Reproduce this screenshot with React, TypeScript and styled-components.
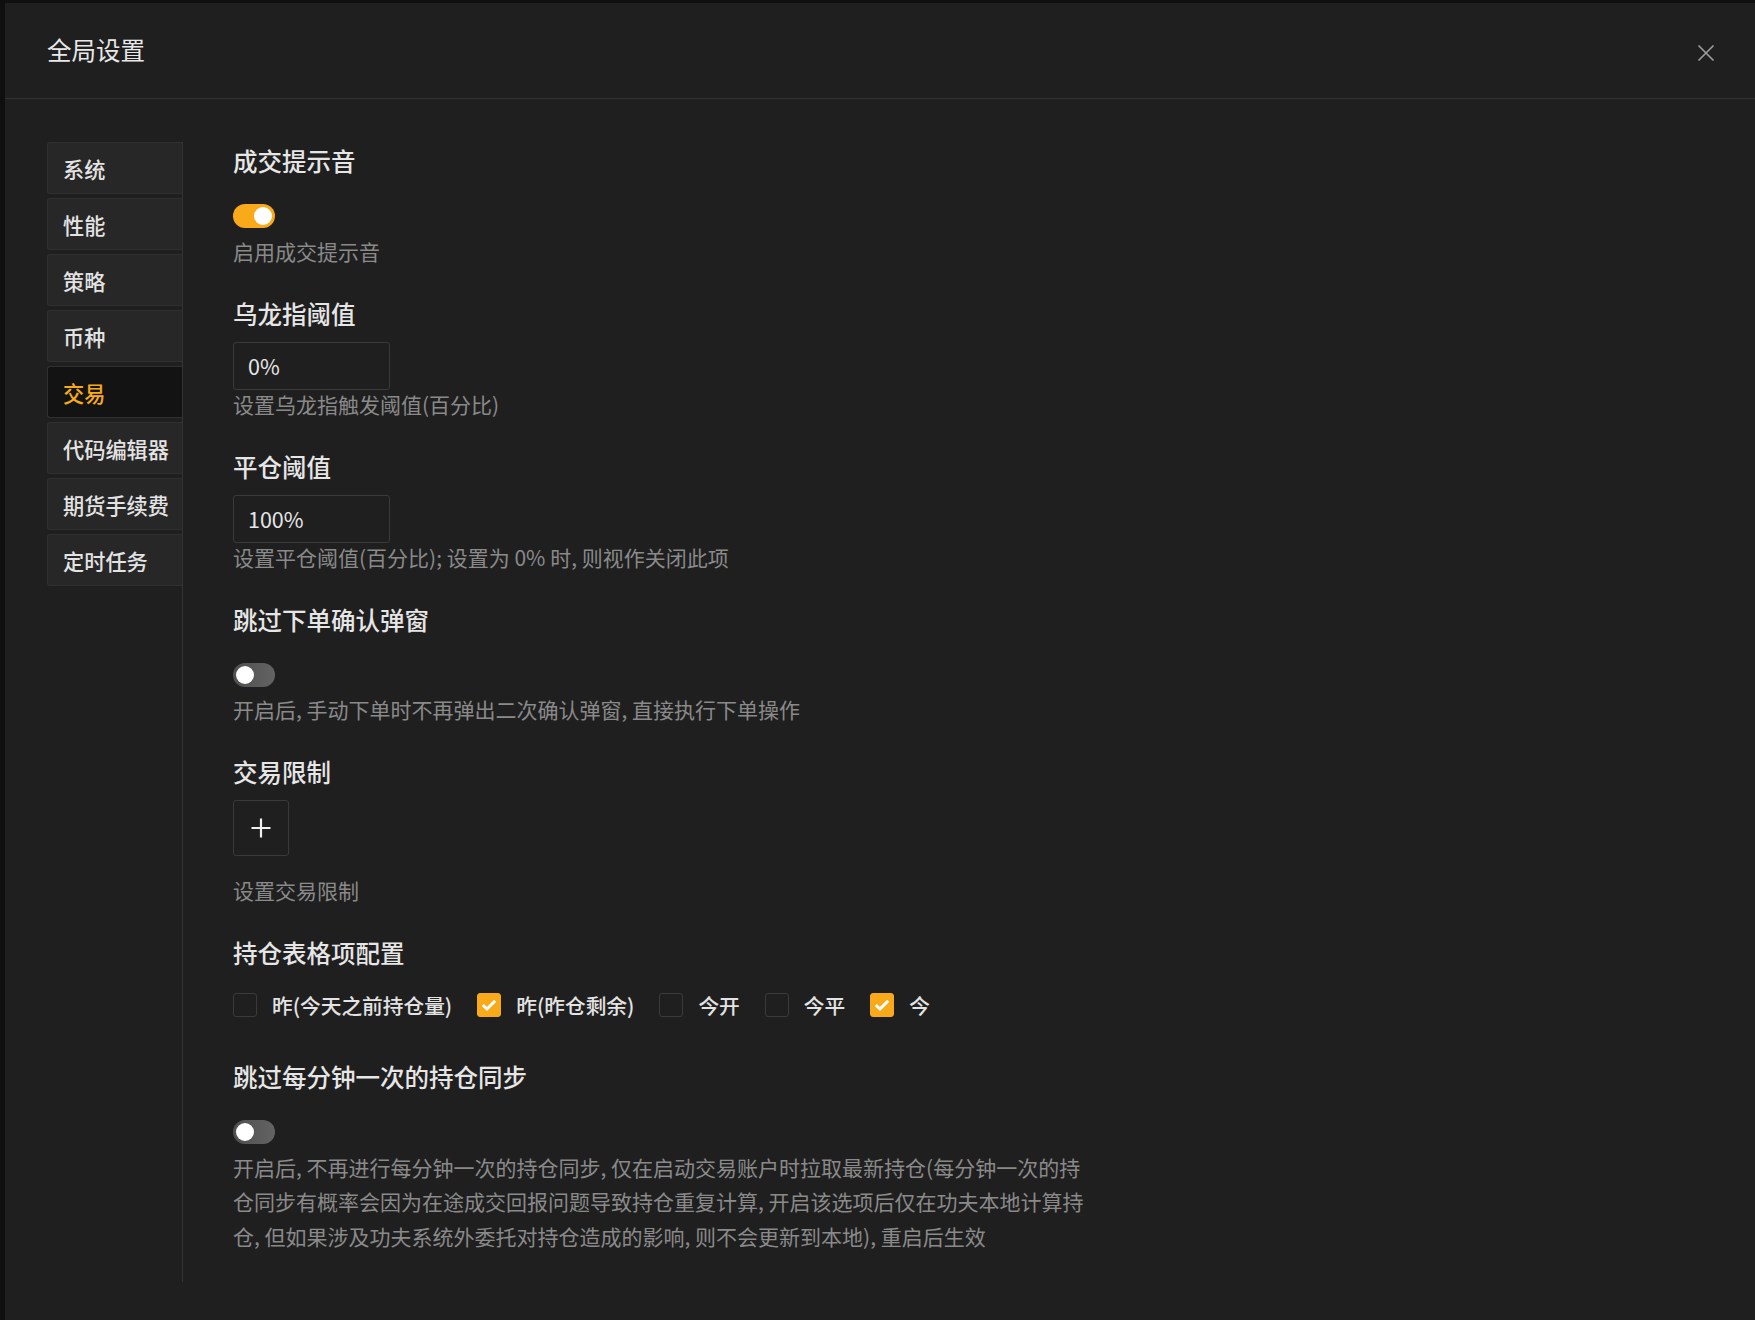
import { useState } from "react";
import styled, { createGlobalStyle } from "styled-components";

const GlobalStyle = createGlobalStyle`
  html, body {
    margin: 0;
    padding: 0;
    background: #0f0f0f;
  }
  body {
    font-family: "Noto Sans CJK SC", "Noto Sans", sans-serif;
    color: #e6e6e6;
  }
  * {
    box-sizing: border-box;
  }
`;

const accent = "#f8aa1a";

const Page = styled.div`
  width: 1755px;
  height: 1320px;
  display: flex;
  padding: 3px 0 0 5px;
  background: #0f0f0f;
  overflow: hidden;
`;

const Modal = styled.div`
  flex: 1;
  display: flex;
  flex-direction: column;
  background: #1f1f1f;
`;

const Header = styled.header`
  height: 96px;
  flex-shrink: 0;
  display: flex;
  align-items: center;
  justify-content: space-between;
  padding: 0 40px 0 42px;
  border-bottom: 1px solid #333333;
`;

const HeaderTitle = styled.h2`
  margin: 0 0 2px;
  font-size: 24.5px;
  font-weight: 400;
  color: #e8e8e8;
  line-height: 34px;
`;

const CloseButton = styled.button`
  width: 18px;
  height: 18px;
  padding: 0;
  border: none;
  background: none;
  display: flex;
  cursor: pointer;
  margin-top: 4px;
`;

const Body = styled.div`
  flex: 1;
  display: flex;
  padding: 43px 0 40px 42px;
`;

const Sidebar = styled.nav`
  width: 136px;
  flex-shrink: 0;
  border-right: 1px solid #333333;
  display: flex;
  flex-direction: column;
  gap: 4px;
`;

const Tab = styled.div<{ $active?: boolean }>`
  height: 52px;
  display: flex;
  align-items: center;
  padding-left: 15px;
  font-size: 21.2px;
  font-weight: 500;
  color: ${(p) => (p.$active ? accent : "#e3e3e3")};
  background: ${(p) => (p.$active ? "#131313" : "#272727")};
  border: 1px solid #303030;
  border-right: none;
  border-radius: 3px 0 0 3px;
  cursor: pointer;
`;

const Content = styled.div`
  flex: 1;
  padding: 2px 0 0 50px;
`;

const Section = styled.section<{ $gap?: number }>`
  margin-bottom: ${(p) => p.$gap ?? 28.5}px;
`;

const Title = styled.h3`
  margin: 0 0 11px;
  font-size: 24.5px;
  line-height: 34px;
  font-weight: 500;
  color: #e6e6e6;
`;

const Desc = styled.div`
  margin-top: -3px;
  font-size: 21px;
  line-height: 34.5px;
  color: #8a8a8a;
  max-width: 858px;
`;

const ToggleRow = styled.div`
  padding: 15px 0 8.5px;
  display: flex;
`;

const Switch = styled.button<{ $on: boolean }>`
  position: relative;
  width: 42px;
  height: 24px;
  padding: 0;
  border: none;
  border-radius: 12px;
  cursor: pointer;
  background: ${(p) =>
    p.$on ? accent : "linear-gradient(90deg, #4f4f4f, #636363)"};

  &::after {
    content: "";
    position: absolute;
    top: 3px;
    left: ${(p) => (p.$on ? "21px" : "3px")};
    width: 18px;
    height: 18px;
    border-radius: 50%;
    background: #ffffff;
  }
`;

const NumberInput = styled.input`
  display: block;
  width: 157px;
  height: 48px;
  padding: 0 14px;
  background: transparent;
  border: 1px solid #3a3a3a;
  border-radius: 3px;
  color: #e6e6e6;
  font-family: inherit;
  font-size: 21.5px;
  outline: none;
`;

const AddButton = styled.button`
  width: 56px;
  height: 56px;
  margin-bottom: 20px;
  display: flex;
  align-items: center;
  justify-content: center;
  padding: 0;
  background: transparent;
  border: 1px solid #3a3a3a;
  border-radius: 3px;
  cursor: pointer;
`;

const CheckRow = styled.div`
  height: 47px;
  display: flex;
  align-items: center;
`;

const CheckItem = styled.label`
  display: flex;
  align-items: center;
  gap: 15px;
  margin-right: 25px;
  font-size: 20.7px;
  font-weight: 500;
  color: #e3e3e3;
  cursor: pointer;
`;

const Box = styled.span<{ $checked: boolean }>`
  width: 24px;
  height: 24px;
  display: flex;
  align-items: center;
  justify-content: center;
  border-radius: 3px;
  border: 1px solid ${(p) => (p.$checked ? accent : "#3a3a3a")};
  background: ${(p) => (p.$checked ? accent : "transparent")};
`;

const tabs = ["系统", "性能", "策略", "币种", "交易", "代码编辑器", "期货手续费", "定时任务"];

const columns = [
  { label: "昨(今天之前持仓量)", checked: false },
  { label: "昨(昨仓剩余)", checked: true },
  { label: "今开", checked: false },
  { label: "今平", checked: false },
  { label: "今", checked: true },
];

function CloseIcon() {
  return (
    <svg width="18" height="18" viewBox="0 0 18 18">
      <path d="M1.5 1.5 L16.5 16.5 M16.5 1.5 L1.5 16.5" stroke="#9a9a9a" strokeWidth="1.7" />
    </svg>
  );
}

function Check() {
  return (
    <svg width="18" height="18" viewBox="0 0 18 18">
      <path d="M2.8 9 L7 13 L15.2 4.8" fill="none" stroke="#ffffff" strokeWidth="3" />
    </svg>
  );
}

export default function App() {
  const [sound, setSound] = useState(true);
  const [skipConfirm, setSkipConfirm] = useState(false);
  const [skipSync, setSkipSync] = useState(false);
  const [checks, setChecks] = useState(columns.map((c) => c.checked));

  return (
    <>
      <GlobalStyle />
      <Page>
        <Modal>
          <Header>
            <HeaderTitle>全局设置</HeaderTitle>
            <CloseButton aria-label="关闭">
              <CloseIcon />
            </CloseButton>
          </Header>
          <Body>
            <Sidebar>
              {tabs.map((t) => (
                <Tab key={t} $active={t === "交易"}>
                  {t}
                </Tab>
              ))}
            </Sidebar>
            <Content>
              <Section>
                <Title>成交提示音</Title>
                <ToggleRow>
                  <Switch $on={sound} onClick={() => setSound(!sound)} />
                </ToggleRow>
                <Desc>启用成交提示音</Desc>
              </Section>

              <Section>
                <Title>乌龙指阈值</Title>
                <NumberInput defaultValue="0%" />
                <Desc>设置乌龙指触发阈值(百分比)</Desc>
              </Section>

              <Section>
                <Title>平仓阈值</Title>
                <NumberInput defaultValue="100%" />
                <Desc>设置平仓阈值(百分比); 设置为 0% 时, 则视作关闭此项</Desc>
              </Section>

              <Section>
                <Title>跳过下单确认弹窗</Title>
                <ToggleRow>
                  <Switch $on={skipConfirm} onClick={() => setSkipConfirm(!skipConfirm)} />
                </ToggleRow>
                <Desc>开启后, 手动下单时不再弹出二次确认弹窗, 直接执行下单操作</Desc>
              </Section>

              <Section>
                <Title>交易限制</Title>
                <AddButton aria-label="添加">
                  <svg width="22" height="22" viewBox="0 0 22 22">
                    <path d="M11 1.5 V20.5 M1.5 11 H20.5" stroke="#f0f0f0" strokeWidth="2.2" />
                  </svg>
                </AddButton>
                <Desc>设置交易限制</Desc>
              </Section>

              <Section $gap={32}>
                <Title>持仓表格项配置</Title>
                <CheckRow>
                  {columns.map((c, i) => (
                    <CheckItem
                      key={c.label}
                      onClick={() => setChecks(checks.map((v, j) => (j === i ? !v : v)))}
                    >
                      <Box $checked={checks[i]}>{checks[i] && <Check />}</Box>
                      {c.label}
                    </CheckItem>
                  ))}
                </CheckRow>
              </Section>

              <Section>
                <Title>跳过每分钟一次的持仓同步</Title>
                <ToggleRow>
                  <Switch $on={skipSync} onClick={() => setSkipSync(!skipSync)} />
                </ToggleRow>
                <Desc>
                  开启后, 不再进行每分钟一次的持仓同步, 仅在启动交易账户时拉取最新持仓(每分钟一次的持仓同步有概率会因为在途成交回报问题导致持仓重复计算, 开启该选项后仅在功夫本地计算持仓, 但如果涉及功夫系统外委托对持仓造成的影响, 则不会更新到本地), 重启后生效
                </Desc>
              </Section>
            </Content>
          </Body>
        </Modal>
      </Page>
    </>
  );
}
